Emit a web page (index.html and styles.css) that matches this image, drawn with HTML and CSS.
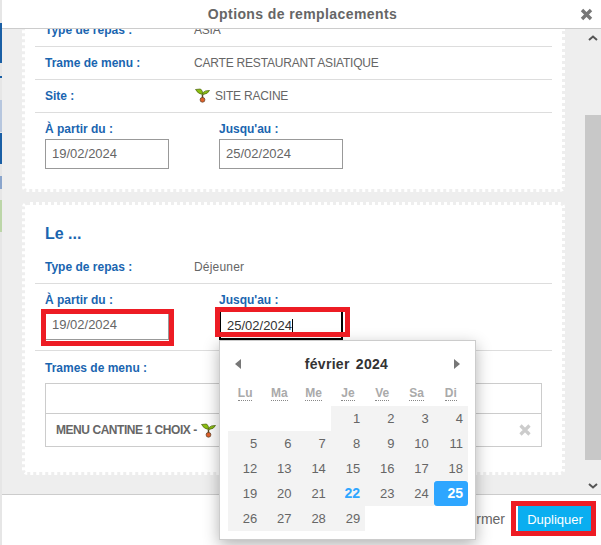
FILE: index.html
```html
<!DOCTYPE html>
<html lang="fr">
<head>
<meta charset="utf-8">
<title>Options de remplacements</title>
<link rel="stylesheet" href="styles.css">
</head>
<body>
<div class="page">
  <div class="strip">
    <i class="s s1"></i><i class="s s2"></i><i class="s s3"></i><i class="s s4"></i><i class="s s5"></i><i class="s s6"></i><i class="s s7"></i><i class="s s8"></i><i class="s s9"></i><i class="s s10"></i><i class="s s11"></i><i class="s s12"></i><i class="s s13"></i>
  </div>
  <div class="modal">
    <header class="head">
      <span class="head-title">Options de remplacements</span>
      <svg class="head-close" width="13" height="13" viewBox="0 0 13 13"><path d="M2 2l9 9M11 2l-9 9" stroke="#777" stroke-width="3.4" fill="none"/></svg>
    </header>
    <div class="body">
      <div class="content">
        <section class="card card-first">
          <div class="row"><span class="label">Type de repas :</span><span class="value value-caps">ASIA</span></div>
          <div class="row"><span class="label">Trame de menu :</span><span class="value value-caps">CARTE RESTAURANT ASIATIQUE</span></div>
          <div class="row"><span class="label">Site :</span><span class="value value-caps value-site">
            <svg class="sprout" width="15" height="15" viewBox="0 0 15 15"><path d="M7.500 6.500V10" stroke="#5a4a20" stroke-width="1.500"/><path d="M.5 1.500L5.500 1Q8 2.500 7.500 6.500Q3 6 .5 1.500z" fill="#8cc010" stroke="#4a6010" stroke-width=".7"/><path d="M7.500 5Q10 2 14.500 2.500Q13 6 8 6.500z" fill="#8cc010" stroke="#4a6010" stroke-width=".7"/><circle cx="7.500" cy="11.800" r="2.400" fill="#e0602a" stroke="#5a3a20" stroke-width=".7"/></svg>
            SITE RACINE</span></div>
          <div class="dates">
            <div class="date-field"><span class="label">À partir du :</span><div class="input">19/02/2024</div></div>
            <div class="date-field"><span class="label">Jusqu'au :</span><div class="input">25/02/2024</div></div>
          </div>
        </section>
        <section class="card">
          <h2 class="card-title">Le ...</h2>
          <div class="row"><span class="label">Type de repas :</span><span class="value">Déjeuner</span></div>
          <div class="dates dates-rule">
            <div class="date-field"><span class="label">À partir du :</span><div class="input">19/02/2024</div></div>
            <div class="date-field"><span class="label">Jusqu'au :</span><div class="input input-focus"><span class="caret">25/02/2024</span></div></div>
          </div>
          <div class="trames-label"><span class="label">Trames de menu :</span></div>
          <div class="table">
            <div class="table-head"></div>
            <div class="table-row">
              <span class="menu-name">MENU CANTINE 1 CHOIX -</span>
              <svg class="sprout" width="15" height="15" viewBox="0 0 15 15"><path d="M7.500 6.500V10" stroke="#5a4a20" stroke-width="1.500"/><path d="M.5 1.500L5.500 1Q8 2.500 7.500 6.500Q3 6 .5 1.500z" fill="#8cc010" stroke="#4a6010" stroke-width=".7"/><path d="M7.500 5Q10 2 14.500 2.500Q13 6 8 6.500z" fill="#8cc010" stroke="#4a6010" stroke-width=".7"/><circle cx="7.500" cy="11.800" r="2.400" fill="#e0602a" stroke="#5a3a20" stroke-width=".7"/></svg>
              <svg class="row-remove" width="12" height="12" viewBox="0 0 12 12"><path d="M1.500 1.500l9 9M10.500 1.500l-9 9" stroke="#ccc" stroke-width="3.200" fill="none"/></svg>
            </div>
          </div>
        </section>
      </div>
      <div class="scrollbar">
        <div class="sb-btn"><svg width="10" height="6" viewBox="0 0 10 6"><path d="M1 5l4-3.500L9 5" stroke="#555" stroke-width="2" fill="none"/></svg></div>
        <div class="sb-thumb"></div>
        <div class="sb-btn sb-btn-down"><svg width="10" height="6" viewBox="0 0 10 6"><path d="M1 1l4 3.500L9 1" stroke="#555" stroke-width="2" fill="none"/></svg></div>
      </div>
    </div>
    <footer class="foot">
      <span class="foot-close">Fermer</span>
      <button class="foot-primary">Dupliquer</button>
    </footer>
  </div>

  <div class="picker">
    <div class="picker-head">
      <svg width="6" height="10" viewBox="0 0 6 10"><path d="M6 0v10L0 5z" fill="#777"/></svg>
      <span class="picker-title">février 2024</span>
      <svg width="6" height="10" viewBox="0 0 6 10"><path d="M0 0v10l6-5z" fill="#777"/></svg>
    </div>
    <div class="dow"><span>Lu</span><span>Ma</span><span>Me</span><span>Je</span><span>Ve</span><span>Sa</span><span>Di</span></div>
    <div class="days">
      <span class="day-blank"></span><span class="day-blank"></span><span class="day-blank"></span>
      <span>1</span><span>2</span><span>3</span><span>4</span>
      <span>5</span><span>6</span><span>7</span><span>8</span><span>9</span><span>10</span><span>11</span>
      <span>12</span><span>13</span><span>14</span><span>15</span><span>16</span><span>17</span><span>18</span>
      <span>19</span><span>20</span><span>21</span><span class="day-today">22</span><span>23</span><span>24</span><span class="day-selected">25</span>
      <span>26</span><span>27</span><span>28</span><span>29</span>
    </div>
  </div>

  <div class="mark mark-from"></div>
  <div class="mark mark-to"></div>
  <div class="mark mark-btn"></div>
</div>
</body>
</html>
```
FILE: styles.css
```css
* { box-sizing: border-box; }
html, body { margin: 0; padding: 0; }
body { font-family: "Liberation Sans", Arial, sans-serif; background: #fff; }
.page { position: relative; display: flex; width: 601px; height: 545px; overflow: hidden; }

.strip { width: 2px; display: flex; flex-direction: column; background: #e6e6e6; }
.s { display: block; width: 2px; flex: none; }
.s1 { height: 23px; }
.s2 { height: 40px; background: #1a5fa5; }
.s3 { height: 13px; }
.s4 { height: 2px; background: #1a5fa5; }
.s5 { height: 22px; }
.s6 { height: 32px; background: #b6c6de; }
.s7 { height: 1px; }
.s8 { height: 31px; background: #1a5fa5; }
.s9 { height: 12px; }
.s10 { height: 13px; background: #8aa5cc; }
.s11 { height: 11px; }
.s12 { height: 32px; background: #bcd6a8; }
.s13 { height: 1px; }

.modal { flex: 1; display: flex; flex-direction: column; min-width: 0; }
.head { flex: none; height: 29px; display: flex; align-items: center; justify-content: center; position: relative; background: #fff; border-bottom: 1px solid #ccc; }
.head-title { font-size: 14px; font-weight: 700; color: #666; letter-spacing: .4px; margin: -1px 0 0 2px; }
.head-close { position: absolute; right: 8px; top: 8px; }

.body { flex: 1; min-height: 0; display: flex; background: #eee; overflow: hidden; }
.content { flex: 1; min-width: 0; padding-left: 20px; padding-right: 20px; }
.card { background: #fff; border: 3px dotted #eee; border-radius: 5px; padding: 10px; margin-bottom: 10px; }
.card-first { margin-top: -28px; }
.card-title { margin: 0; height: 36px; line-height: 38px; font-size: 16px; font-weight: 700; color: #1a65b0; padding-left: 10px; }

.label { font-size: 12px; font-weight: 700; color: #1a65b0; }
.value { font-size: 12px; color: #666; letter-spacing: .2px; }
.value-caps { letter-spacing: -.2px; }
.row { display: flex; align-items: center; height: 33px; padding: 0 0 1px 10px; border-bottom: 1px solid #ddd; }
.row .label { width: 149px; flex: none; }
.value-site { display: flex; align-items: center; gap: 5px; margin-left: 1px; }

.dates { display: flex; height: 66px; padding: 9px 0 0 10px; gap: 50px; }
.dates-rule { height: 67px; border-bottom: 1px solid #ddd; }
.date-field { display: flex; flex-direction: column; gap: 3px; width: 124px; }
.date-field .label { line-height: 14px; }
.input { height: 30px; width: 124px; border: 1px solid #999; padding-left: 6px; font-size: 13px; line-height: 28px; color: #666; }
.input-focus { display: flex; align-items: center; border: 2px solid #000; padding-left: 6px; color: #333; }
.caret { height: 13px; line-height: 13px; border-right: 1px solid #000; }

.trames-label { height: 32px; padding: 9px 0 0 10px; line-height: 14px; }
.table { margin: 0 10px 15px; border: 1px solid #ccc; }
.table-head { height: 30px; border-bottom: 1px solid #ccc; }
.table-row { height: 32px; display: flex; align-items: center; padding: 0 10px 0 10px; }
.menu-name { font-size: 12px; font-weight: 700; color: #666; letter-spacing: -.45px; }
.sprout { flex: none; }
.table-row .sprout { margin-left: 4px; }
.row-remove { margin-left: auto; }

.scrollbar { width: 16px; flex: none; display: flex; flex-direction: column; }
.sb-btn { height: 17px; display: flex; align-items: center; justify-content: center; }
.sb-thumb { margin-top: 69px; height: 345px; background: #c8c8c8; }
.sb-btn-down { margin-top: auto; }

.foot { flex: none; height: 51px; background: #fff; border-top: 1px solid #ccc; display: flex; justify-content: flex-end; align-items: flex-start; padding: 10px 9px 0 0; gap: 13px; }
.foot-close { font-size: 14px; color: #666; line-height: 29px; }
.foot-primary { width: 74px; height: 28px; border: 0; padding: 0; background: #0aaef0; color: #fff; font: 13px "Liberation Sans", Arial, sans-serif; }

.picker { position: absolute; left: 219px; top: 340px; width: 257px; height: 200px; padding: 0 7px 0 8px; background: #fff; border: 1px solid #ccc; box-shadow: 0 5px 15px rgba(0, 0, 0, .3); }
.picker-head { height: 44px; display: flex; align-items: center; justify-content: space-between; padding: 1px 8px 0 7px; }
.picker-title { font-size: 14px; font-weight: 700; color: #333; word-spacing: 2px; letter-spacing: .3px; margin-left: -2px; }
.dow, .days { display: grid; grid-template-columns: repeat(7, 1fr); }
.dow { height: 21px; padding-bottom: 3px; align-items: center; text-align: center; font-size: 12px; font-weight: 700; color: #aaa; }
.dow span { justify-self: center; border-bottom: 1px dotted #888; line-height: 13px; }
.days { grid-auto-rows: 25px; font-size: 13px; color: #666; }
.days span { background: #f3f3f3; text-align: right; padding-right: 5px; line-height: 25px; }
.days .day-blank { background: transparent; }
.days .day-today { color: #2ea6ff; font-weight: 700; font-size: 14px; }
.days .day-selected { background: #2ea6ff; color: #fff; font-weight: 700; border-radius: 3px; font-size: 14px; }

.mark { position: absolute; border: 5px solid #ed1c24; }
.mark-from { left: 41px; top: 309px; width: 133px; height: 37px; }
.mark-to { left: 215px; top: 307px; width: 135px; height: 30px; }
.mark-btn { left: 511px; top: 501px; width: 85px; height: 35px; }
```
